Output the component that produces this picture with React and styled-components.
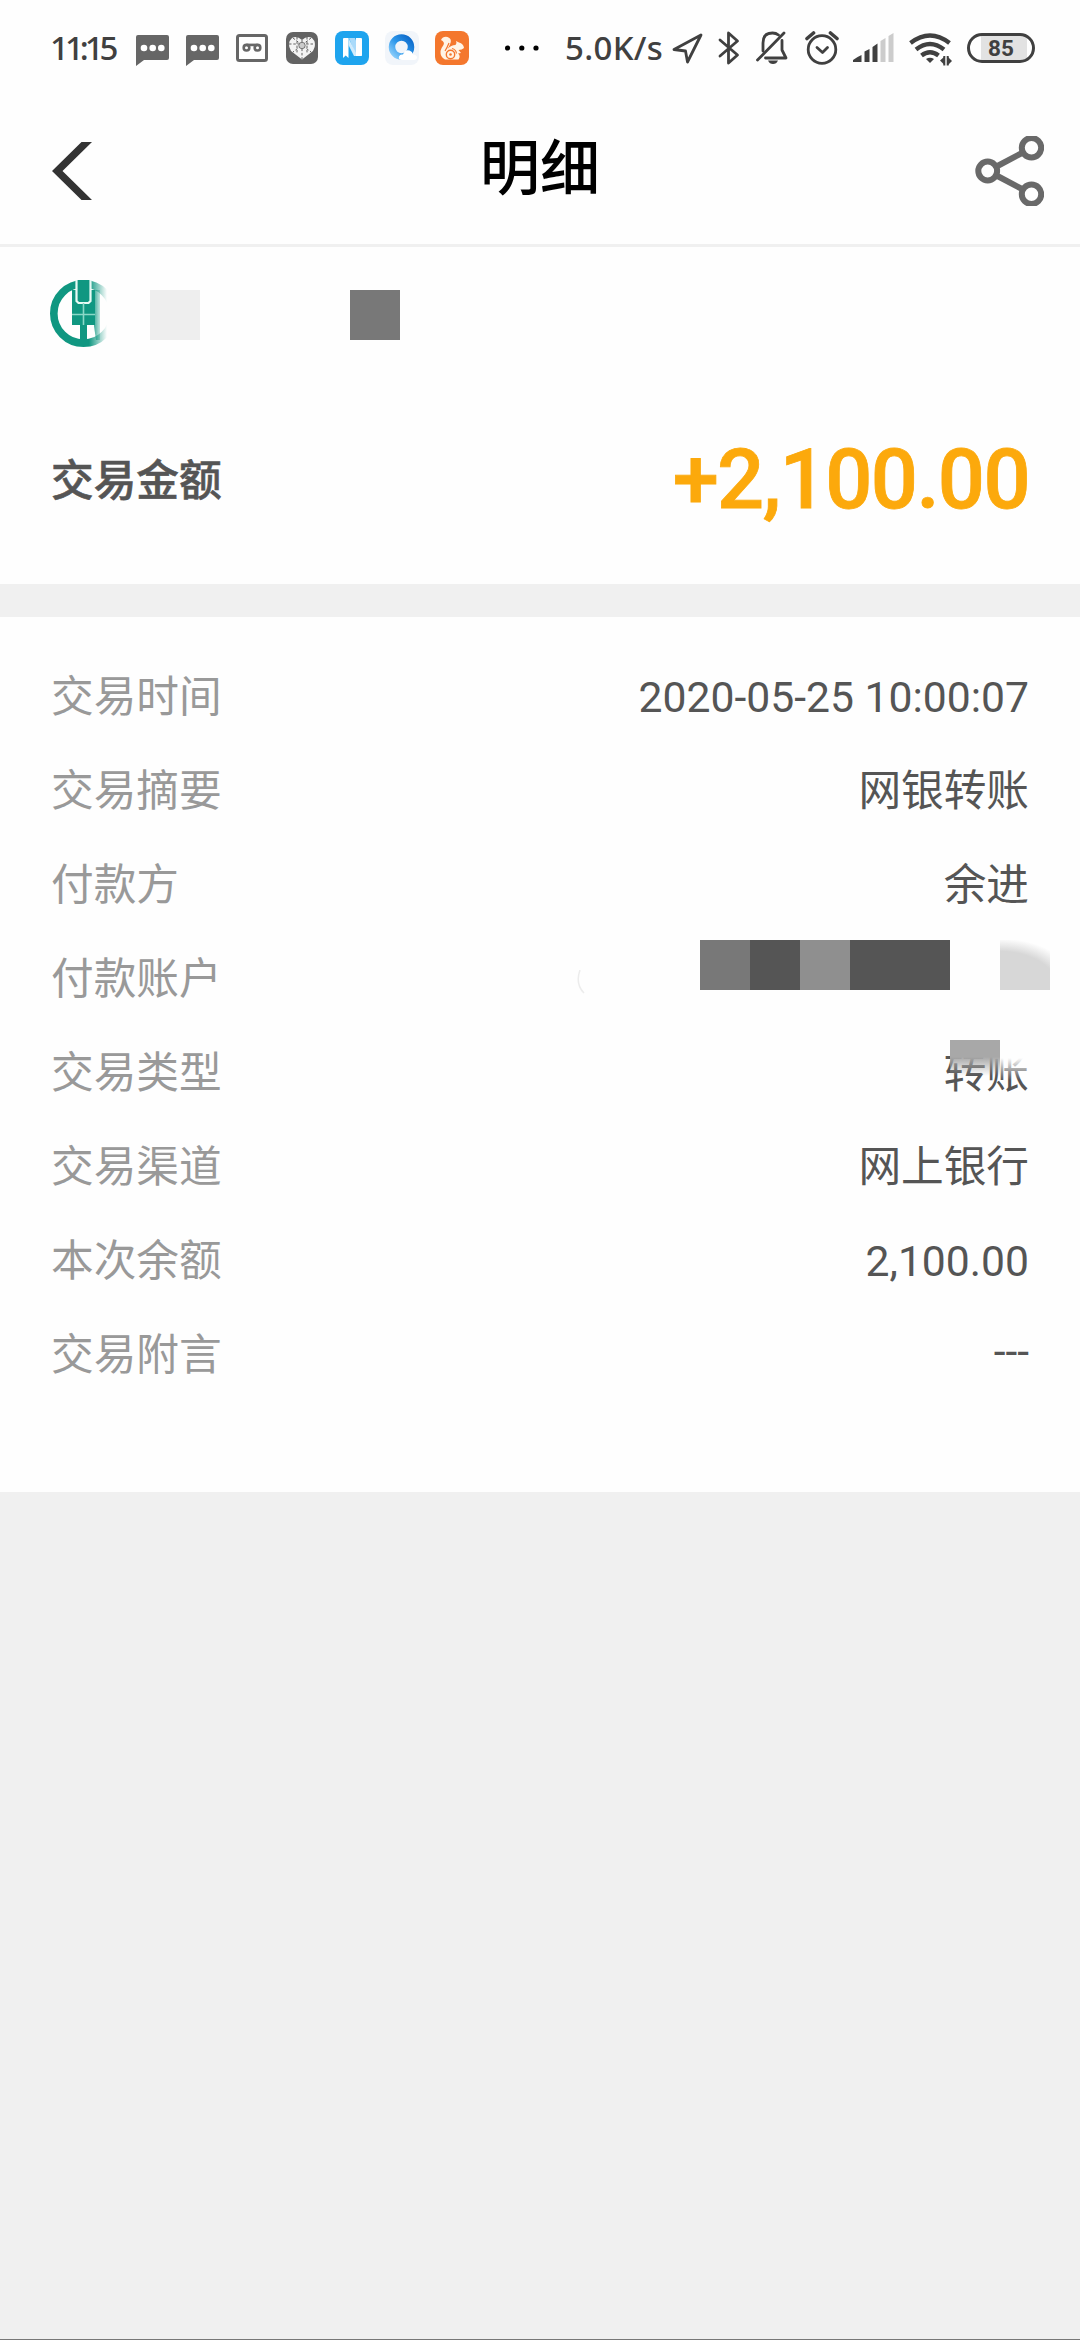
import React from "react";
import styled, { createGlobalStyle } from "styled-components";

const GlobalStyle = createGlobalStyle`
  * {
    box-sizing: border-box;
  }
  body {
    margin: 0;
    background-color: #f0f0f0;
    font-family: Roboto, "Noto Sans CJK SC", sans-serif;
  }
`;

const Page = styled.div`
  display: flex;
  flex-direction: column;
  width: 1080px;
  height: 2340px;
  overflow: hidden;
  background-color: #f0f0f0;
  border-bottom: 1px solid #777;
`;

const StatusBar = styled.div`
  display: flex;
  align-items: center;
  justify-content: space-between;
  height: 98px;
  padding: 0 45px 2px 50px;
  background-color: #fefefe;
  color: #404040;
`;

const StatusGroup = styled.div`
  display: flex;
  align-items: center;
`;

const StatusText = styled.span`
  width: ${({ $width }) => $width}px;
  font-family: "Noto Sans", sans-serif;
  font-size: 33px;
  font-weight: 500;
  line-height: 96px;
  letter-spacing: ${({ $spacing }) => $spacing || 0}px;
  white-space: nowrap;
`;

const Glyph = styled.svg`
  display: block;
  flex: none;
  margin-left: ${({ $gap }) => $gap || 0}px;
  margin-top: ${({ $drop }) => $drop || 0}px;
`;

const Header = styled.div`
  display: flex;
  align-items: center;
  justify-content: space-between;
  height: 149px;
  padding: 0 36px 1px 51px;
  background-color: #fefefe;
  border-bottom: 3px solid #f0f0f0;
`;

const HeaderSide = styled.div`
  display: flex;
  justify-content: ${({ $end }) => ($end ? "flex-end" : "flex-start")};
  width: 70px;
`;

const Title = styled.h1`
  flex: 1;
  margin: 0 0 2px;
  padding-right: 15px;
  color: #000;
  font-size: 60px;
  font-weight: 500;
  line-height: 80px;
  text-align: center;
`;

const Account = styled.div`
  display: flex;
  align-items: flex-start;
  height: 123px;
  padding: 33px 50px 0;
  background-color: #fefefe;
`;

const Block = styled.span`
  flex: none;
  width: ${({ $width }) => $width || 50}px;
  height: 50px;
  margin-left: ${({ $gap }) => $gap || 0}px;
  margin-top: ${({ $top }) => $top || 0}px;
  background: ${({ $fill }) => $fill};
`;

const Amount = styled.div`
  display: flex;
  align-items: center;
  justify-content: space-between;
  height: 214px;
  padding: 0 51px;
  background-color: #fefefe;
`;

const AmountLabel = styled.span`
  color: #555;
  font-size: 42.67px;
  font-weight: 500;
  -webkit-text-stroke: 0.6px #555;
`;

const AmountValue = styled.span`
  margin-top: 5px;
  color: #fca90c;
  font-size: 83px;
  font-weight: 500;
  letter-spacing: -1.6px;
  -webkit-text-stroke: 0.8px #fca90c;
`;

const Details = styled.div`
  height: 875px;
  margin-top: 33px;
  padding: 33px 51px 0;
  background-color: #fefefe;
`;

const Row = styled.div`
  position: relative;
  display: flex;
  align-items: center;
  justify-content: space-between;
  height: 94px;
  font-size: 42.67px;
  line-height: 94px;
`;

const Label = styled.span`
  color: #999;
`;

const Value = styled.span`
  margin-bottom: ${({ $raised }) => ($raised ? 8 : 0)}px;
  color: #555;
`;

const Masked = styled.div`
  display: flex;
  align-items: flex-start;
  height: 94px;
  margin-right: -21px;
  padding-top: 8px;
`;

// fades the top of the value lying under it
const Veil = styled.div`
  position: absolute;
  top: 14px;
  right: -21px;
  display: flex;
  width: 100px;
  height: 50px;
`;

const VeilPart = styled.span`
  width: 50px;
  height: 50px;
  background: ${({ $fill }) => $fill};
`;

const ChatIcon = () => (
  <Glyph $gap={17} $drop={4} width="33" height="31" viewBox="0 0 33 31">
    <path d="M2 0H31Q33 0 33 2V23Q33 25 31 25H8L0 31V2Q0 0 2 0Z" fill="#666" />
    <circle cx="8" cy="13" r="3.3" fill="#fff" />
    <circle cx="16.7" cy="13" r="3.3" fill="#fff" />
    <circle cx="25.3" cy="13" r="3.3" fill="#fff" />
  </Glyph>
);

const TapeIcon = () => (
  <Glyph $gap={17} width="32" height="28" viewBox="0 0 32 28">
    <rect x="1.5" y="1.5" width="29" height="25" rx="2" fill="none" stroke="#666" strokeWidth="3" />
    <g fill="none" stroke="#666" strokeWidth="2.6">
      <circle cx="10.5" cy="13.7" r="2.8" />
      <circle cx="21.5" cy="13.7" r="2.8" />
      <path d="M10.5 10.9H21.5" />
    </g>
  </Glyph>
);

const HeartIcon = () => (
  <Glyph $gap={18} width="32" height="32" viewBox="0 0 32 32">
    <rect width="32" height="32" rx="7" fill="#636363" />
    <path d="M16 27.5L5 19Q0.500 11 6 6Q11 3.500 16 8Q21 3.500 26 6Q31.500 11 27 19Z" fill="#f4f4f4" />
    <path
      d="M7 6L25 20M25 6L7 20M3 12H29M16 8V27M11 5V22M21 5V22"
      fill="none"
      stroke="#636363"
      strokeWidth="1"
      strokeDasharray="2.5 1.8"
    />
    <circle cx="16" cy="13.5" r="3.2" fill="#ccc" stroke="#777" />
  </Glyph>
);

const NoteIcon = () => (
  <Glyph $gap={17} width="34" height="34" viewBox="0 0 34 34">
    <rect width="34" height="34" rx="8" fill="#1ea4ee" />
    <path d="M14 7L20 7L27 25H21Z" fill="#a9dafa" />
    <path d="M8 8Q8 7 9 7H13.5V27L10.7 24.5L8 27Z" fill="#fff" />
    <path d="M21 7H26Q27 7 27 8V24Q27 25 26 25H21Z" fill="#fff" />
    <path d="M13.5 7L21 22V25H19L13.5 14Z" fill="#cfeafc" />
  </Glyph>
);

const BrowserIcon = () => (
  <Glyph $gap={16} width="34" height="34" viewBox="0 0 34 34">
    <defs>
      <linearGradient id="ring" x1="0" y1="1" x2="1" y2="0">
        <stop offset="0" stopColor="#8fd0fb" />
        <stop offset="0.5" stopColor="#2b96ea" />
        <stop offset="1" stopColor="#0a66c8" />
      </linearGradient>
    </defs>
    <rect width="34" height="34" rx="8" fill="#f1f5fa" />
    <circle cx="16.5" cy="16" r="9.5" fill="none" stroke="url(#ring)" strokeWidth="6.5" />
    <path d="M17 29Q13 29 14 25.5Q15 23 18 23.5Q20 18 24.5 19.5Q27.5 20.5 28 23.5Q32 23.5 32 27Q31.5 29 29 29Z" fill="#fff" />
  </Glyph>
);

const SquirrelIcon = () => (
  <Glyph $gap={16} width="34" height="34" viewBox="0 0 34 34">
    <rect width="34" height="34" rx="8" fill="#f4772d" />
    <path
      d="M6 9Q8 5 12.500 6Q17 7.500 15.500 12Q14.500 15 12.500 18Q16 14 20.500 14L21.500 12L21 10L24 11.500Q28.500 12.500 29 17Q27 19 23.500 19L26 22L23 22.500Q26 25 23.500 28.500H10Q5 26 5.500 20Q6.500 16.500 8.500 14Q10 11 6 9Z"
      fill="#fff4e6"
    />
    <circle cx="15.500" cy="23.500" r="4.200" fill="none" stroke="#f4772d" strokeWidth="1.400" />
    <circle cx="15.500" cy="23.500" r="1.300" fill="#f4772d" />
    <path d="M17 17.500Q21 18.500 21.500 22.500M14 12Q12 17 10 20" fill="none" stroke="#f4772d" strokeWidth="1.200" />
  </Glyph>
);

const MoreIcon = () => (
  <Glyph $gap={36} width="34" height="6" viewBox="0 0 34 6">
    <circle cx="2.6" cy="3" r="2.6" fill="#000" />
    <circle cx="16.8" cy="3" r="2.6" fill="#000" />
    <circle cx="31" cy="3" r="2.6" fill="#000" />
  </Glyph>
);

const LocationIcon = () => (
  <Glyph $gap={8} width="32" height="32" viewBox="0 0 32 32">
    <path d="M29 3L2 17.5L13.5 19L15.5 30Z" fill="none" stroke="#404040" strokeWidth="2.8" strokeLinejoin="round" />
  </Glyph>
);

const BluetoothIcon = () => (
  <Glyph $gap={14} width="22" height="34" viewBox="0 0 22 34">
    <path
      d="M2 9L19.5 24L10.5 32V2L19.5 10L2 25"
      fill="none"
      stroke="#404040"
      strokeWidth="2.8"
      strokeLinejoin="round"
      strokeLinecap="round"
    />
  </Glyph>
);

const MuteIcon = () => (
  <Glyph $gap={16} width="32" height="34" viewBox="0 0 32 34">
    <g fill="none" stroke="#404040" strokeWidth="2.8" strokeLinecap="round">
      <path d="M1.5 29L28 2" />
      <path d="M7 20V12Q7 2 16.5 2Q20 2 22.5 4" />
      <path d="M26 9.5V19L30 27H9.5" strokeLinejoin="round" />
    </g>
    <path d="M12 29.5H22Q20.5 33 17 33Q13.5 33 12 29.5Z" fill="#404040" />
  </Glyph>
);

const AlarmIcon = () => (
  <Glyph $gap={17} width="34" height="34" viewBox="0 0 34 34">
    <g fill="none" stroke="#404040" strokeWidth="2.8" strokeLinecap="round" strokeLinejoin="round">
      <circle cx="17" cy="18.5" r="13.8" />
      <path d="M12 16.5L17.5 21.5L22.5 16.5" />
      <path d="M2 7.5L8.5 2M32 7.5L25.5 2" strokeWidth="3.6" />
    </g>
  </Glyph>
);

const SignalIcon = () => (
  <Glyph $gap={14} width="41" height="30" viewBox="0 0 41 30">
    <path d="M0 29V27Q4 24 8.5 22V29Z" fill="#404040" />
    <path d="M11.5 29V18.5L16.5 16V29ZM19.5 29V14L24.5 10.5V29Z" fill="#404040" />
    <path d="M27.5 29V8L32.5 5V29ZM35.5 29V3L40.5 0V29Z" fill="#ccc" />
  </Glyph>
);

const WifiIcon = () => (
  <Glyph $gap={15} $drop={3} width="43" height="33" viewBox="0 0 43 33">
    <g fill="none" stroke="#404040" strokeWidth="4.4">
      <path d="M1.5 10Q21 -5 40.5 10" />
      <path d="M7 16.5Q21 5.500 35 16.5" />
      <path d="M12.5 22.5Q21 16 29.5 22.5" />
    </g>
    <path d="M17 26Q21 23.5 25 26L21 30Z" fill="#404040" />
    <path d="M35 24V31.500L31 27.500ZM39 32V24L43 28Z" fill="#404040" />
    <path d="M35.300 23V32.500M38.700 23V32.500" stroke="#404040" strokeWidth="2" />
  </Glyph>
);

const Battery = styled.div`
  display: flex;
  align-items: center;
  justify-content: center;
  width: 68px;
  height: 30px;
  margin-left: 15px;
  border: 3px solid #404040;
  border-radius: 15px;
  background: linear-gradient(to right, #fefefe 11px, #e2e2e2 11px, #e2e2e2 57px, #fefefe 57px);
  font-size: 22.5px;
  font-weight: 700;
  line-height: 24px;
`;

const BackIcon = () => (
  <Glyph $gap={1} width="40" height="58" viewBox="0 0 40 58">
    <path d="M29.5 0H40L10.5 29L40 58H29.5L0 29Z" fill="#333" />
  </Glyph>
);

const ShareIcon = () => (
  <Glyph width="69" height="70" viewBox="0 0 69 70">
    <g fill="none" stroke="#696969" strokeWidth="6">
      <circle cx="12.7" cy="35" r="9.4" />
      <circle cx="56.5" cy="11.7" r="9.7" />
      <circle cx="56.5" cy="58.3" r="9.7" />
      <path d="M21.5 30.5L48 16.5M21.5 39.5L48 53.5" />
    </g>
  </Glyph>
);

const BankLogo = () => (
  <Glyph width="60" height="67" viewBox="0 0 60 67">
    <defs>
      <linearGradient id="fade" x1="0" x2="1" y1="0" y2="0">
        <stop offset="0.65" stopColor="#fff" />
        <stop offset="0.95" stopColor="#000" />
      </linearGradient>
      <linearGradient id="smear" x1="0" x2="1" y1="0" y2="0">
        <stop offset="0" stopColor="#109781" stopOpacity="0.8" />
        <stop offset="1" stopColor="#109781" stopOpacity="0.25" />
      </linearGradient>
      <mask id="logoMask">
        <rect width="60" height="67" fill="url(#fade)" />
      </mask>
    </defs>
    <g mask="url(#logoMask)">
      <circle cx="33.5" cy="33.5" r="29.7" fill="none" stroke="#109781" strokeWidth="7.6" />
    </g>
    <path d="M45 10H50V60H46L44 46Z" fill="url(#smear)" />
    <path d="M22 10H45V45H37V62H30V45H22Z" fill="#109781" />
    <path d="M26.500 -3V21L28.500 23H38.500L40.500 21V-3" fill="#109781" stroke="#e8faf5" strokeWidth="2.200" />
    <path d="M33.500 23V45M22 34.500H45" stroke="#8ad8c7" strokeWidth="1.600" />
  </Glyph>
);

// what is left of the first masked digit
const ArcIcon = () => (
  <Glyph $drop={30} width="8" height="24" viewBox="0 0 8 24">
    <path d="M3 0Q-2 14 7 23" fill="none" stroke="#ececec" strokeWidth="1.5" />
  </Glyph>
);

const curve = "radial-gradient(ellipse 70px 46px at 0 50px, #d7d7d7 84%, #fefefe 112%)";

const rows = [
  { label: "交易时间", value: "2020-05-25 10:00:07" },
  { label: "交易摘要", value: "网银转账" },
  { label: "付款方", value: "余进" },
  { label: "付款账户", masked: true },
  { label: "交易类型", value: "转账", veiled: true },
  { label: "交易渠道", value: "网上银行" },
  { label: "本次余额", value: "2,100.00" },
  { label: "交易附言", value: "---", raised: true },
];

const MaskedAccount = () => (
  <Masked>
    <ArcIcon />
    <Block $gap={115} $fill="#787878" />
    <Block $fill="#555" />
    <Block $fill="#8f8f8f" />
    <Block $width={100} $fill="#555" />
    <Block $gap={50} $fill={curve} />
  </Masked>
);

const App = () => {
  return (
    <Page>
      <GlobalStyle />
      <StatusBar>
        <StatusGroup>
          <StatusText $width={69} $spacing={-4}>11:15</StatusText>
          <ChatIcon />
          <ChatIcon />
          <TapeIcon />
          <HeartIcon />
          <NoteIcon />
          <BrowserIcon />
          <SquirrelIcon />
          <MoreIcon />
        </StatusGroup>
        <StatusGroup>
          <StatusText $width={99} $spacing={0.3}>5.0K/s</StatusText>
          <LocationIcon />
          <BluetoothIcon />
          <MuteIcon />
          <AlarmIcon />
          <SignalIcon />
          <WifiIcon />
          <Battery>85</Battery>
        </StatusGroup>
      </StatusBar>
      <Header>
        <HeaderSide>
          <BackIcon />
        </HeaderSide>
        <Title>明细</Title>
        <HeaderSide $end>
          <ShareIcon />
        </HeaderSide>
      </Header>
      <Account>
        <BankLogo />
        <Block $gap={40} $top={10} $fill="#eee" />
        <Block $gap={150} $top={10} $fill="#787878" />
      </Account>
      <Amount>
        <AmountLabel>交易金额</AmountLabel>
        <AmountValue>+2,100.00</AmountValue>
      </Amount>
      <Details>
        {rows.map((row) => (
          <Row key={row.label}>
            <Label>{row.label}</Label>
            {row.masked ? <MaskedAccount /> : <Value $raised={row.raised}>{row.value}</Value>}
            {row.veiled && (
              <Veil>
                <VeilPart $fill="linear-gradient(#a8a8a8 34%, rgba(254, 254, 254, 0) 72%)" />
                <VeilPart $fill="linear-gradient(#fefefe 36%, rgba(254, 254, 254, 0) 80%)" />
              </Veil>
            )}
          </Row>
        ))}
      </Details>
    </Page>
  );
};

export default App;
